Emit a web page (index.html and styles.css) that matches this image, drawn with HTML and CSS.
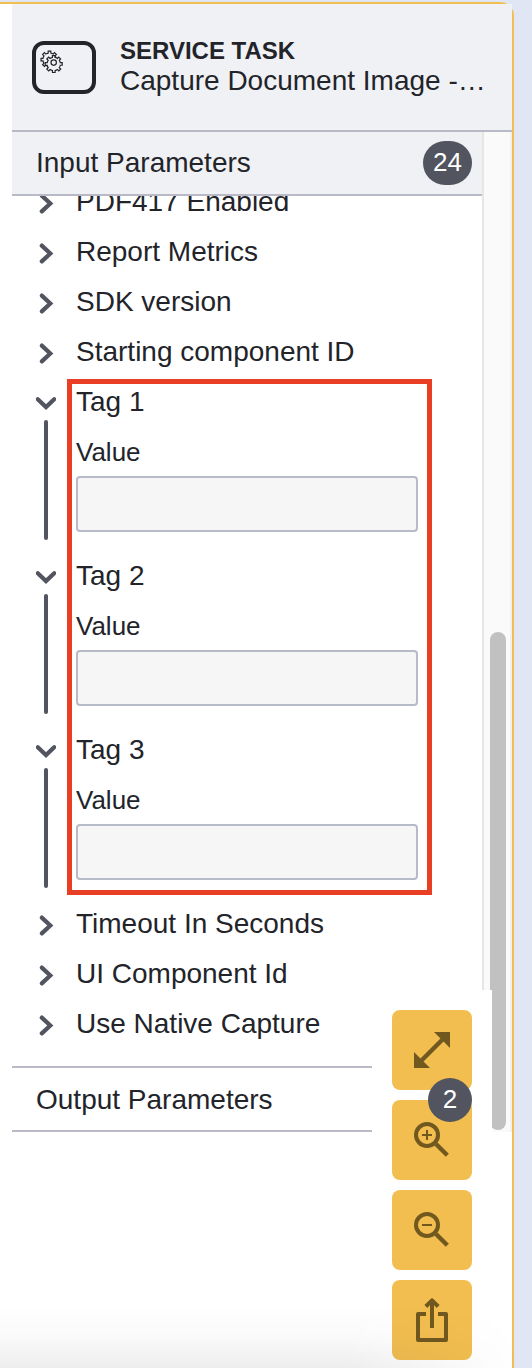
FILE: index.html
```
<!DOCTYPE html>
<html lang="en">
<head>
<meta charset="utf-8">
<title>Properties</title>
<link rel="stylesheet" href="styles.css">
</head>
<body>
<svg class="defs" width="0" height="0">
  <defs>
    <path id="gear" d="m 1.1,8.4 v -1.71335 c 0.352326,-0.0705 0.703932,-0.17838 1.047628,-0.32133 0.344416,-0.14465 0.665822,-0.32133 0.966377,-0.52145 l 1.19431,1.18005 1.567487,-1.57688 -1.195028,-1.18014 c 0.403376,-0.61394 0.683079,-1.29908 0.825447,-2.01824 l 1.622133,-0.01 v -2.2196 l -1.636514,0.01 c -0.07333,-0.35153 -0.178319,-0.70024 -0.323564,-1.04372 -0.145244,-0.34406 -0.321407,-0.6644 -0.522735,-0.96217 l 1.131035,-1.13631 -1.583305,-1.56293 -1.129598,1.13589 c -0.614052,-0.40108 -1.302883,-0.68093 -2.022633,-0.82247 l 0.0093,-1.61852 h -2.241173 l 0.0042,1.63124 c -0.353763,0.0736 -0.705369,0.17977 -1.049785,0.32371 -0.344415,0.14437 -0.665102,0.32092 -0.9635006,0.52006 l -1.1698628,-1.15823 -1.5667691,1.5792 1.1684265,1.15669 c -0.4026573,0.61283 -0.68308,1.29797 -0.8247287,2.01713 l -1.6588041,0.003 v 2.22174 l 1.6724648,-0.006 c 0.073327,0.35077 0.1797598,0.70243 0.3242851,1.04472 0.1452428,0.34448 0.3214064,0.6644 0.5227339,0.96066 l -1.1993431,1.19723 1.5840256,1.56011 1.1964668,-1.19348 c 0.6140517,0.40346 1.3028827,0.68232 2.0233517,0.82331 l 0.000719,1.69892 z"/>
    <path id="right" d="M5.8 6.6 L14.3 14.5 L5.8 22.4"/>
    <path id="down" d="M1.8 10.2 L10 18 L18.2 10.2"/>
  </defs>
</svg>
<main class="panel">
  <header class="header">
    <svg class="task-icon" viewBox="0 0 64 54">
      <rect class="task-frame" x="2" y="3" width="60" height="49" rx="10"/>
      <use class="gear" href="#gear" transform="translate(17.6 18.2) scale(1.18)"/>
      <use class="gear" href="#gear" transform="translate(21.8 22.6) scale(1.18)"/>
      <circle class="gear-hub" cx="21.7" cy="22.6" r="2.7"/>
    </svg>
    <div class="heading">
      <div class="type">SERVICE TASK</div>
      <div class="name">Capture Document Image -…</div>
    </div>
  </header>
  <div class="body">
    <div class="groups">
      <div class="group-header">
        <span class="title">Input Parameters</span>
        <span class="count">24</span>
      </div>
      <div class="list">
        <div class="items">
          <div class="row"><svg class="chevron" viewBox="0 0 20 30"><use href="#right"/></svg><span>PDF417 Enabled</span></div>
          <div class="row"><svg class="chevron" viewBox="0 0 20 30"><use href="#right"/></svg><span>Report Metrics</span></div>
          <div class="row"><svg class="chevron" viewBox="0 0 20 30"><use href="#right"/></svg><span>SDK version</span></div>
          <div class="row"><svg class="chevron" viewBox="0 0 20 30"><use href="#right"/></svg><span>Starting component ID</span></div>
          <div class="tags">
            <section class="tag">
              <div class="row"><svg class="chevron" viewBox="0 0 20 30"><use href="#down"/></svg><span>Tag 1</span></div>
              <div class="entry"><i class="bar"></i><label class="field"><span class="label">Value</span><input class="input" type="text"></label></div>
            </section>
            <section class="tag">
              <div class="row"><svg class="chevron" viewBox="0 0 20 30"><use href="#down"/></svg><span>Tag 2</span></div>
              <div class="entry"><i class="bar"></i><label class="field"><span class="label">Value</span><input class="input" type="text"></label></div>
            </section>
            <section class="tag">
              <div class="row"><svg class="chevron" viewBox="0 0 20 30"><use href="#down"/></svg><span>Tag 3</span></div>
              <div class="entry"><i class="bar"></i><label class="field"><span class="label">Value</span><input class="input" type="text"></label></div>
            </section>
            <div class="highlight"></div>
          </div>
          <div class="row"><svg class="chevron" viewBox="0 0 20 30"><use href="#right"/></svg><span>Timeout In Seconds</span></div>
          <div class="row"><svg class="chevron" viewBox="0 0 20 30"><use href="#right"/></svg><span>UI Component Id</span></div>
          <div class="row"><svg class="chevron" viewBox="0 0 20 30"><use href="#right"/></svg><span>Use Native Capture</span></div>
        </div>
      </div>
      <div class="group-header output">
        <span class="title">Output Parameters</span>
      </div>
    </div>
    <div class="scroll-track"><div class="scroll-thumb"></div></div>
  </div>
  <div class="toolbar">
    <button class="tool" aria-label="Fit"><svg viewBox="0 0 80 80"><path class="solid" d="M42 22H58V38ZM22 42V58H38Z"/><path class="line" stroke-width="4.4" d="M28 52L52 28"/></svg></button>
    <button class="tool" aria-label="Zoom in"><svg viewBox="0 0 80 80"><circle class="line" stroke-width="4" cx="35" cy="35" r="11"/><path class="line" stroke-width="2" d="M30 35H40M35 30V40"/><path class="line" stroke-width="4.4" d="M44 44L55.3 55.3"/></svg></button>
    <button class="tool" aria-label="Zoom out"><svg viewBox="0 0 80 80"><circle class="line" stroke-width="4" cx="35" cy="35" r="11"/><path class="line" stroke-width="2" d="M30 35H40"/><path class="line" stroke-width="4.4" d="M44 44L55.3 55.3"/></svg></button>
    <button class="tool" aria-label="Share"><svg viewBox="0 0 80 80"><path class="line" stroke-width="4" stroke-linejoin="round" d="M34 34H26V60H54V34H46M40 48V21"/><path class="line" stroke-width="4" stroke-linejoin="round" d="M33.8 26.5L40 20.3L46.2 26.5"/></svg></button>
    <span class="count small">2</span>
  </div>
  <div class="shade"></div>
</main>
</body>
</html>
```
FILE: styles.css
```
* { box-sizing: border-box; }
body {
  margin: 0;
  height: 1368px;
  padding-top: 2px;
  overflow: hidden;
  background: #e0e6f3;
  color: #22242a;
  font: 28px/32px "Liberation Sans", Arial, sans-serif;
}
.defs { position: absolute; }
.panel {
  position: relative;
  width: 514px;
  height: 1366px;
  padding-left: 12px;
  background: #fff;
  border-top: 2px solid #f2be50;
  border-right: 2px solid #f2be50;
  border-top-right-radius: 14px;
}
.header {
  display: flex;
  gap: 24px;
  height: 128px;
  padding: 36px 20px 0;
  background: #f0f1f4;
  border-bottom: 2px solid #b9bac6;
}
.task-icon { width: 64px; height: 54px; flex: none; }
.task-frame { fill: none; stroke: #22242a; stroke-width: 4; }
.gear { fill: #f0f1f4; stroke: #22242a; stroke-width: 1; }
.gear-hub { fill: none; stroke: #22242a; stroke-width: 1.2; }
.heading { white-space: nowrap; padding-top: 1px; }
.type { font-size: 24px; line-height: 20px; font-weight: bold; }
.name { line-height: 40px; }
.body { display: flex; height: 1000px; }
.groups { width: 470px; }
.group-header {
  display: flex;
  justify-content: space-between;
  align-items: center;
  height: 64px;
  padding: 0 10px 0 24px;
  background: #f0f1f4;
  border-bottom: 2px solid #b9bac6;
}
.output { height: 66px; padding-top: 2px; background: #fff; border-top: 2px solid #b9bac6; }
.count {
  width: 49px;
  height: 44px;
  margin-top: -1px;
  border-radius: 22px;
  background: #52555f;
  color: #fff;
  font-size: 26px;
  line-height: 43px;
  text-align: center;
}
.list { height: 870px; overflow: hidden; }
.items { margin-top: -19px; }
.row {
  display: flex;
  align-items: center;
  gap: 20px;
  height: 50px;
  padding-left: 24px;
}
.chevron {
  width: 20px;
  height: 30px;
  margin-top: 3px;
  fill: none;
  stroke: #52555f;
  stroke-width: 4.2;
  stroke-linecap: round;
}
.tags { position: relative; }
.tag { height: 174px; }
.entry { display: flex; gap: 28px; padding-left: 32px; }
.bar {
  width: 4px;
  height: 120px;
  margin-top: -7px;
  border-radius: 2px;
  background: #52555f;
}
.field { display: flex; flex-direction: column; width: 342px; }
.label { height: 49px; font-size: 26px; line-height: 51px; }
.input {
  width: 342px;
  height: 56px;
  border: 2px solid #b7bbc8;
  border-radius: 4px;
  background: #f6f6f6;
}
.highlight {
  position: absolute;
  left: 55px;
  top: 2px;
  width: 365px;
  height: 516px;
  border: 5px solid #e94025;
}
.scroll-track {
  width: 30px;
  padding: 500px 4px 0 6px;
  background: #fafafa;
  border-left: 2px solid #e6e6e6;
  border-right: 2px solid #f0f0f0;
}
.scroll-thumb { width: 16px; height: 498px; border-radius: 8px; background: #c1c1c1; }
.toolbar {
  position: absolute;
  left: 372px;
  top: 986px;
  width: 120px;
  height: 378px;
  padding: 20px;
  display: flex;
  flex-direction: column;
  gap: 10px;
  background: #fff;
}
.tool {
  width: 80px;
  height: 80px;
  flex: none;
  padding: 0;
  border: 0;
  border-radius: 8px;
  background: #f2be50;
}
.tool svg { display: block; width: 80px; height: 80px; }
.solid { fill: #70581f; }
.line { fill: none; stroke: #70581f; }
.small { position: absolute; left: 56px; top: 88px; width: 44px; margin: 0; }
.shade {
  position: absolute;
  left: 0;
  bottom: 0;
  width: 532px;
  height: 64px;
  background: linear-gradient(to bottom, rgba(0,0,0,0), rgba(0,0,0,.02) 50%, rgba(0,0,0,.07));
  -webkit-mask-image: linear-gradient(to right, #000 65%, transparent 98%);
  mask-image: linear-gradient(to right, #000 65%, transparent 98%);
}
```
